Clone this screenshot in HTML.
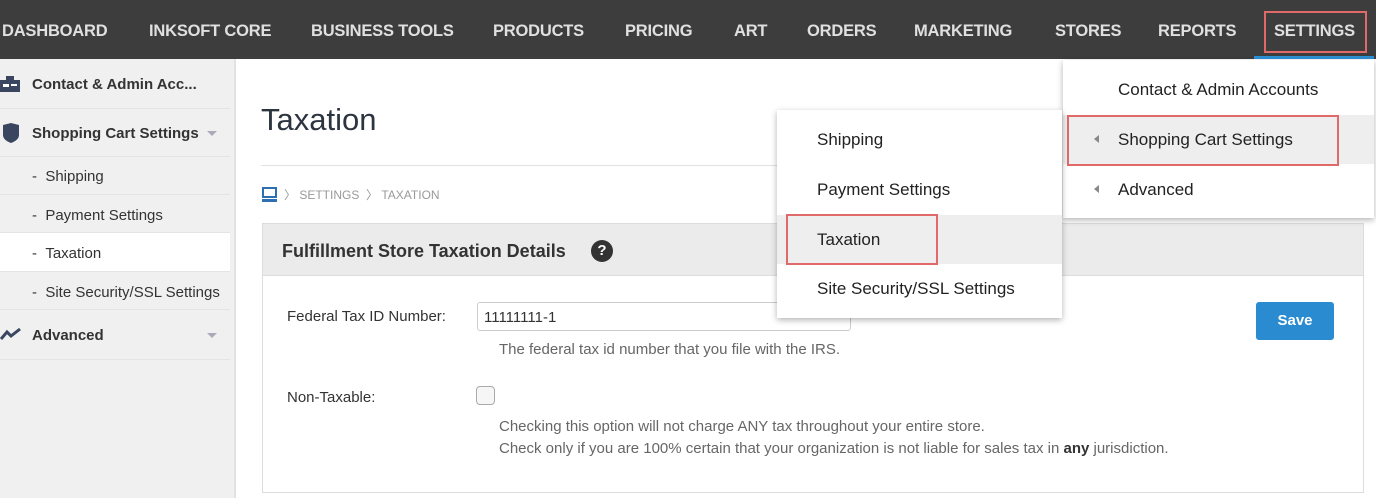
<!DOCTYPE html><html><head><meta charset="utf-8"><style>
*{margin:0;padding:0;box-sizing:border-box}
body{width:1376px;height:498px;overflow:hidden;background:#fff;font-family:"Liberation Sans",sans-serif;position:relative;color:#333}
.a{position:absolute;white-space:nowrap}
.nav{left:0;top:0;width:1376px;height:59px;background:#3d3d3d}
.nav span{position:absolute;top:22px;font-size:16.5px;font-weight:bold;color:#e0e0e0;letter-spacing:-0.2px}
.side{left:0;top:59px;width:236px;height:439px;background:#f0f0f0;border-right:2px solid #e2e2e2}
.si{position:absolute;left:0;width:230px;border-bottom:1px solid #e4e4e4;font-size:15px;color:#333}
.dd{background:#fff;box-shadow:0 2px 6px rgba(0,0,0,.3)}
.it{position:absolute;left:0;right:0;height:49px;line-height:49px;font-size:17px;color:#222}
.red{position:absolute;border:2px solid #e06a6a}
</style></head><body>
<div class="a nav">
<span style="left:2px">DASHBOARD</span><span style="left:149px">INKSOFT CORE</span><span style="left:311px">BUSINESS TOOLS</span><span style="left:493px">PRODUCTS</span><span style="left:625px">PRICING</span><span style="left:734px">ART</span><span style="left:807px">ORDERS</span><span style="left:914px">MARKETING</span><span style="left:1055px">STORES</span><span style="left:1158px">REPORTS</span><span style="left:1274px">SETTINGS</span>
<div class="red" style="left:1264px;top:11px;width:103px;height:42px"></div>
<div style="position:absolute;left:1254px;top:56px;width:120px;height:3px;background:#2d8fd5"></div>
</div>
<div class="a side">
<div class="si" style="top:0;height:50px"><svg style="position:absolute;left:0;top:17px" width="20" height="16"><rect x="0" y="4" width="20" height="12" fill="#3a4560"/><rect x="6" y="0" width="8" height="5" fill="#3a4560"/><rect x="3" y="8" width="6" height="3" fill="#fff"/><rect x="11" y="8" width="6" height="2" fill="#fff"/></svg><b style="position:absolute;left:32px;top:17px;font-size:15px">Contact &amp; Admin Acc...</b></div>
<div class="si" style="top:50px;height:48px"><svg style="position:absolute;left:3px;top:14px" width="16" height="20"><path d="M0 2L8 0L16 2V12Q16 17 8 20Q0 17 0 12Z" fill="#3a4560"/></svg><b style="position:absolute;left:32px;top:16px;font-size:15px">Shopping Cart Settings</b><span style="position:absolute;left:207px;top:22px;border:5px solid transparent;border-top:5px solid #aab;"></span></div>
<div class="si" style="top:98px;height:38px"><span style="position:absolute;left:32px;top:11px">- &nbsp;Shipping</span></div>
<div class="si" style="top:136px;height:38px"><span style="position:absolute;left:32px;top:12px">- &nbsp;Payment Settings</span></div>
<div class="si" style="top:174px;height:39px;background:#fff"><span style="position:absolute;left:32px;top:12px">- &nbsp;Taxation</span></div>
<div class="si" style="top:213px;height:38px"><span style="position:absolute;left:32px;top:12px">- &nbsp;Site Security/SSL Settings</span></div>
<div class="si" style="top:251px;height:50px"><svg style="position:absolute;left:0;top:17px" width="22" height="14"><path d="M1 12L7 5L11 9L20 2" stroke="#3a4560" stroke-width="3" fill="none"/></svg><b style="position:absolute;left:32px;top:17px;font-size:15px">Advanced</b><span style="position:absolute;left:207px;top:23px;border:5px solid transparent;border-top:5px solid #aab;"></span></div>
</div>
<div class="a" style="left:261px;top:102px;font-size:31px;color:#2c3440">Taxation</div>
<div class="a" style="left:261px;top:165px;width:1102px;height:1px;background:#e2e2e2"></div>
<svg class="a" style="left:262px;top:187px" width="15" height="16"><rect x="1" y="1" width="13" height="9" fill="none" stroke="#2d6fb0" stroke-width="2"/><rect x="0" y="12" width="15" height="3" fill="#2d6fb0"/></svg>
<div class="a" style="left:284px;top:186px;font-size:12px;color:#999">〉 SETTINGS &nbsp;〉 TAXATION</div>
<div class="a" style="left:262px;top:223px;width:1102px;height:270px;border:1px solid #ddd"></div>
<div class="a" style="left:263px;top:224px;width:1100px;height:52px;background:#ebebeb;border-bottom:1px solid #ddd"></div>
<div class="a" style="left:282px;top:241px;font-size:18px;font-weight:bold;color:#333">Fulfillment Store Taxation Details</div>
<div class="a" style="left:591px;top:240px;width:22px;height:22px;border-radius:50%;background:#333;color:#fff;font-size:15px;font-weight:bold;text-align:center;line-height:22px">?</div>
<div class="a" style="left:287px;top:308px;font-size:15px">Federal Tax ID Number:</div>
<div class="a" style="left:477px;top:302px;width:374px;height:29px;border:1px solid #ccc;border-radius:3px;font-size:15px;padding:6px 6px">11111111-1</div>
<div class="a" style="left:499px;top:341px;font-size:15px;color:#666">The federal tax id number that you file with the IRS.</div>
<div class="a" style="left:287px;top:389px;font-size:15px">Non-Taxable:</div>
<div class="a" style="left:476px;top:386px;width:19px;height:19px;border:1px solid #aaa;border-radius:4px;background:#f6f6f6"></div>
<div class="a" style="left:499px;top:416px;font-size:15px;color:#666;line-height:22px">Checking this option will not charge ANY tax throughout your entire store.<br>Check only if you are 100% certain that your organization is not liable for sales tax in <b style="color:#333">any</b> jurisdiction.</div>
<div class="a" style="left:1256px;top:302px;width:78px;height:38px;background:#2a8bd0;border-radius:3px;color:#fff;font-size:15px;font-weight:bold;text-align:center;line-height:38px">Save</div>
<div class="a dd" style="left:1063px;top:60px;width:311px;height:158px">
<div class="it" style="top:5px;padding-left:55px">Contact &amp; Admin Accounts</div>
<div class="it" style="top:55px;padding-left:55px;background:#eee">Shopping Cart Settings</div>
<div class="it" style="top:105px;padding-left:55px">Advanced</div>
<span style="position:absolute;left:27px;top:75px;border:4px solid transparent;border-right:5px solid #888"></span>
<span style="position:absolute;left:27px;top:125px;border:4px solid transparent;border-right:5px solid #888"></span>
<div class="red" style="left:4px;top:55px;width:272px;height:51px"></div>
</div>
<div class="a dd" style="left:777px;top:110px;width:285px;height:208px">
<div class="it" style="top:5px;padding-left:40px">Shipping</div>
<div class="it" style="top:55px;padding-left:40px">Payment Settings</div>
<div class="it" style="top:105px;padding-left:40px;background:#eee">Taxation</div>
<div class="it" style="top:154px;padding-left:40px">Site Security/SSL Settings</div>
<div class="red" style="left:9px;top:104px;width:152px;height:51px"></div>
</div>
</body></html>
